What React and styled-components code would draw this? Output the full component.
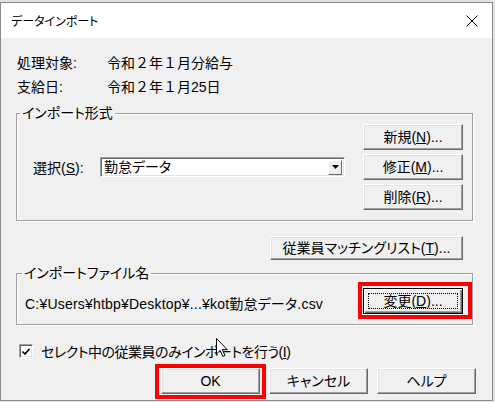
import React from 'react';
import styled, { createGlobalStyle } from 'styled-components';

const Global = createGlobalStyle`
  body {
    margin: 0;
    background: #e2e2e2;
    font-family: "Liberation Sans", "Noto Sans CJK JP", sans-serif;
    color: #000;
  }
`;

const Window = styled.div`
  position: relative;
  width: 491px;
  margin-top: 2px;
  border: 1px solid #8c8c8c;
  background: #f0f0f0;
`;

const TitleBar = styled.div`
  height: 35px;
  background: #fff;
  display: flex;
  align-items: center;
  justify-content: space-between;
  padding: 0 14px 0 10px;
  font-size: 12px;
  font-feature-settings: "palt";
`;

const Body = styled.div`
  padding: 12px 16px 6px 15px;
  font-size: 14px;
  font-feature-settings: "palt";
`;

const InfoGrid = styled.div`
  display: grid;
  grid-template-columns: 90px auto;
  grid-auto-rows: 24px;
  align-items: center;
  padding-left: 1px;
  font-feature-settings: normal;
`;

const Group = styled.fieldset`
  margin: ${p => p.$top}px 3px 0 0;
  padding: 0;
  min-width: 0;
  border: 1px solid #a0a0a0;
  box-shadow: 1px 1px 0 #fff, inset 1px 1px 0 #fff;
`;

const Legend = styled.legend`
  margin-left: ${p => p.$indent || 3}px;
  padding: 0 2px;
  line-height: 20px;
  font-size: 14px;
`;

const GroupBody = styled.div`
  display: flex;
  align-items: center;
  justify-content: space-between;
  padding: ${p => p.$pad};
`;

const ButtonStack = styled.div`
  display: flex;
  flex-direction: column;
  gap: 4px;
`;

const SelectRow = styled.div`
  display: flex;
  align-items: center;
`;

const FieldLabel = styled.span`
  width: 67px;
`;

const Combo = styled.div`
  box-sizing: border-box;
  width: 245px;
  height: 20px;
  background: #fff;
  border: 1px solid;
  border-color: #a0a0a0 #fff #fff #a0a0a0;
  box-shadow: inset 1px 1px 0 #696969, inset -1px -1px 0 #e3e3e3;
  display: flex;
  align-items: center;
  justify-content: space-between;
  padding: 0 2px 0 3px;
  line-height: 1;
`;

const ComboArrow = styled.span`
  box-sizing: border-box;
  width: 14px;
  height: 15px;
  background: #f0f0f0;
  border: 1px solid;
  border-color: #fff #696969 #696969 #fff;
  display: flex;
  align-items: center;
  justify-content: center;
`;

const Button = styled.button`
  position: relative;
  box-sizing: border-box;
  width: ${p => p.$w || 100}px;
  height: ${p => p.$h || 26}px;
  padding: 0;
  background: #f0f0f0;
  border: 1px solid;
  border-color: ${p => (p.$default ? '#000' : '#fff #696969 #696969 #fff')};
  box-shadow: ${p =>
    p.$default
      ? 'inset 1px 1px 0 #fff, inset -1px -1px 0 #696969, inset -2px -2px 0 #a0a0a0'
      : 'inset -1px -1px 0 #a0a0a0, inset 1px 1px 0 #e3e3e3'};
  font-family: inherit;
  font-weight: 400;
  font-size: 14px;
  font-feature-settings: "palt";
  line-height: 1;
  color: #000;

  &::before {
    content: '';
    display: ${p => (p.$default ? 'block' : 'none')};
    position: absolute;
    inset: 4px;
    border: 1px dotted #000;
  }

  &::after {
    content: '';
    display: ${p => (p.$mark ? 'block' : 'none')};
    position: absolute;
    inset: ${p => p.$mark || '0'};
    border: 4px solid #f00;
    pointer-events: none;
  }
`;

const RightRow = styled.div`
  display: flex;
  justify-content: flex-end;
  margin-top: 15px;
  padding-right: 13px;
`;

const PathText = styled.span`
  padding-top: 4px;
  font-size: 14px;
  letter-spacing: 0.2px;
`;

const CheckRow = styled.label`
  display: flex;
  align-items: center;
  gap: 8px;
  height: 20px;
  margin: 16px 0 0 3px;
  letter-spacing: -0.5px;
`;

const CheckBox = styled.span`
  box-sizing: border-box;
  width: 14px;
  height: 14px;
  background: #fff;
  border: 1px solid;
  border-color: #a0a0a0 #fff #fff #a0a0a0;
  box-shadow: inset 1px 1px 0 #696969, inset -1px -1px 0 #e3e3e3;
  display: flex;
  align-items: center;
  justify-content: center;
`;

const Footer = styled.div`
  display: flex;
  justify-content: flex-end;
  gap: 9px;
  margin-top: 7px;
`;

const Pointer = styled.svg`
  position: absolute;
  left: 215px;
  top: 335px;
`;

const Close = () => (
  <svg width="12" height="12" viewBox="0 0 12 12">
    <path d="M0.5 0.5 L11.5 11.5 M11.5 0.5 L0.5 11.5" stroke="#000" strokeWidth="1" />
  </svg>
);

export default function App() {
  return (
    <>
      <Global />
      <Window>
        <TitleBar>
          <span>データインポート</span>
          <Close />
        </TitleBar>
        <Body>
          <InfoGrid>
            <span>処理対象:</span>
            <span>令和２年１月分給与</span>
            <span>支給日:</span>
            <span>令和２年１月25日</span>
          </InfoGrid>

          <Group $top={5}>
            <Legend>インポート形式</Legend>
            <GroupBody $pad="1px 9px 10px 16px">
              <SelectRow>
                <FieldLabel>選択(<u>S</u>):</FieldLabel>
                <Combo>
                  <span>勤怠データ</span>
                  <ComboArrow>
                    <svg width="7" height="4" viewBox="0 0 7 4">
                      <path d="M0 0 H7 L3.5 4 Z" fill="#000" />
                    </svg>
                  </ComboArrow>
                </Combo>
              </SelectRow>
              <ButtonStack>
                <Button>新規(<u>N</u>)...</Button>
                <Button>修正(<u>M</u>)...</Button>
                <Button>削除(<u>R</u>)...</Button>
              </ButtonStack>
            </GroupBody>
          </Group>

          <RightRow>
            <Button $w={193} $h={24}>従業員マッチングリスト(<u>T</u>)...</Button>
          </RightRow>

          <Group $top={3}>
            <Legend $indent={5}>インポートファイル名</Legend>
            <GroupBody $pad="5px 9px 10px 8px">
              <PathText>C:¥Users¥htbp¥Desktop¥...¥kot勤怠データ.csv</PathText>
              <Button $default $mark="-7px -10px -6px -6px">変更(<u>D</u>)...</Button>
            </GroupBody>
          </Group>

          <CheckRow>
            <CheckBox>
              <svg width="8" height="7" viewBox="0 0 8 7">
                <path d="M0.5 3.5 L3 6 L7.5 0.8" stroke="#000" strokeWidth="1.6" fill="none" />
              </svg>
            </CheckBox>
            <span>セレクト中の従業員のみインポートを行う(<u>I</u>)</span>
          </CheckRow>

          <Footer>
            <Button $w={99} $mark="-5px -7px -6px -7px">OK</Button>
            <Button $w={99}>キャンセル</Button>
            <Button $w={99}>ヘルプ</Button>
          </Footer>
        </Body>

        <Pointer width="12" height="20" viewBox="0 0 12 20">
          <path d="M0.5 0.5 V16 L4.2 12.4 L6.8 18.5 L9 17.6 L6.4 11.6 H11.2 Z" fill="#fff" stroke="#000" strokeWidth="1" />
        </Pointer>
      </Window>
    </>
  );
}
